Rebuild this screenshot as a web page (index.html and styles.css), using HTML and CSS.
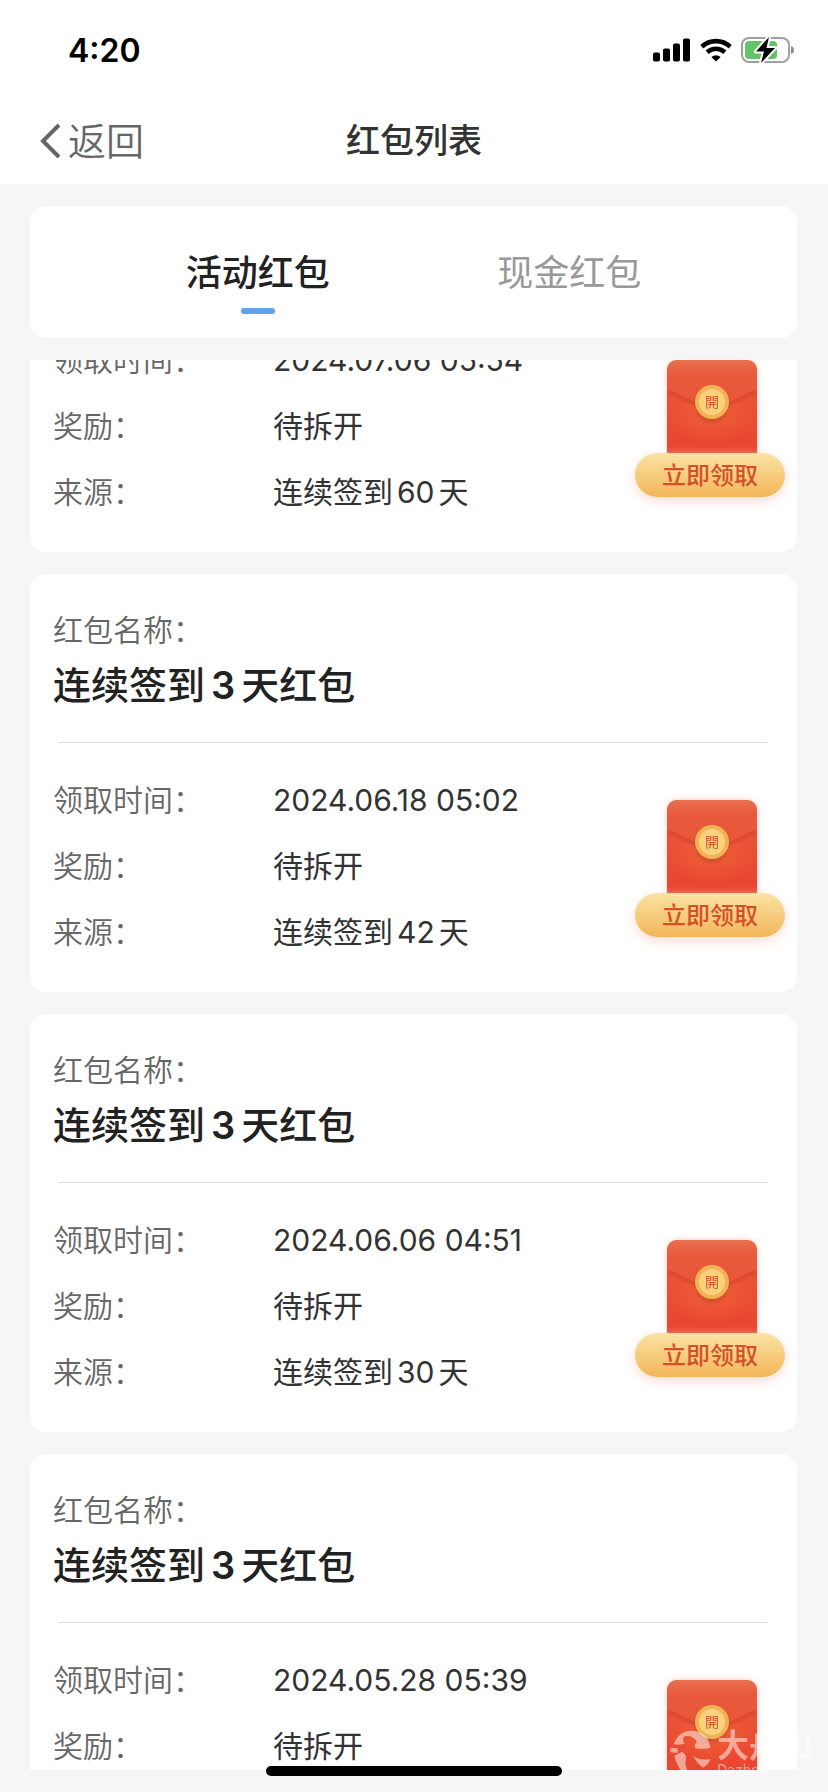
FILE: index.html
```html
<!DOCTYPE html>
<html lang="zh-CN">
<head>
<meta charset="utf-8">
<meta name="viewport" content="width=device-width, initial-scale=1">
<title>红包列表</title>
<link rel="stylesheet" href="styles.css">
</head>
<body>
<svg class="defs" width="0" height="0" aria-hidden="true">
  <defs>
    <linearGradient id="body-fill" x1="0" y1="0" x2="0" y2="1">
      <stop offset="0" stop-color="#e9593b"/>
      <stop offset="1" stop-color="#ea452e"/>
    </linearGradient>
    <radialGradient id="body-glow" cx="0.5" cy="0.4" r="0.5">
      <stop offset="0" stop-color="#ee6238" stop-opacity="0.9"/>
      <stop offset="1" stop-color="#ee6238" stop-opacity="0"/>
    </radialGradient>
    <linearGradient id="flap-fill" x1="0" y1="0" x2="0" y2="1">
      <stop offset="0" stop-color="#e8704f"/>
      <stop offset="0.3" stop-color="#e85a3c"/>
      <stop offset="1" stop-color="#e85738"/>
    </linearGradient>
    <filter id="soft" x="-20%" y="-20%" width="140%" height="150%"><feGaussianBlur stdDeviation="1.5"/></filter>
  </defs>
  <symbol id="envelope" viewBox="0 0 90 93">
    <path d="M0 93V12Q0 0 12 0H78Q90 0 90 12V93Z" fill="url(#body-fill)"/>
    <rect y="20" width="90" height="73" fill="url(#body-glow)"/>
    <path d="M1 30L36 46Q45 50 54 46L89 30V32L54 49Q45 53 36 49L1 32Z" fill="#b8321f" opacity="0.6" filter="url(#soft)"/>
    <path d="M0 29V12Q0 0 12 0H78Q90 0 90 12V29L54 45Q45 49 36 45Z" fill="url(#flap-fill)"/>
    <circle cx="45" cy="45" r="17" fill="#a93a1c" opacity="0.4" filter="url(#soft)"/>
    <circle cx="45" cy="42" r="17" fill="#f2b355"/>
    <circle cx="45" cy="42" r="13" fill="#fad27b"/>
    <text class="coin-text" x="45" y="47" text-anchor="middle">開</text>
  </symbol>
</svg>

<div class="app">
  <header class="header">
    <div class="status">
      <span class="time">4:20</span>
      <div class="status-icons">
        <svg width="38" height="24" viewBox="0 0 38 24" aria-hidden="true">
          <rect x="0" y="14.5" width="7" height="9" rx="1.8"/><rect x="10" y="10.5" width="7" height="13" rx="1.8"/>
          <rect x="20" y="5.5" width="7" height="18" rx="1.8"/><rect x="30" y="0.5" width="7" height="23" rx="1.8"/>
        </svg>
        <svg width="32" height="24" viewBox="0 0 32 24" aria-hidden="true">
          <g fill="none" stroke="#000" stroke-width="4.6">
            <path d="M1.8 8.7C9.8 1.2 22.2 1.2 30.2 8.7"/>
            <path d="M7.2 14.2C12.4 9.6 19.6 9.6 24.8 14.2"/>
          </g>
          <path d="M16 23.6L11.3 18.9Q16 15.5 20.7 18.9Z"/>
        </svg>
        <svg width="54" height="28" viewBox="0 0 54 28" aria-hidden="true">
          <rect x="1" y="2" width="47" height="24" rx="7" fill="#fff" stroke="#a0a0a0" stroke-width="2"/>
          <rect x="4" y="5" width="32" height="18" rx="4" fill="#62c466"/>
          <path d="M50 10Q53 11 53 14T50 18Z" fill="#8c8c8c"/>
          <path d="M28 1L15 15.5H23L20 27L34 12H25.5Z" stroke="#fff" stroke-width="4" stroke-linejoin="round" paint-order="stroke"/>
        </svg>
      </div>
    </div>
    <nav class="nav">
      <button class="back" type="button">
        <svg width="22" height="36" viewBox="0 0 22 36" aria-hidden="true"><path d="M19 2L3 18L19 34" fill="none" stroke="#666" stroke-width="4"/></svg>
        <span>返回</span>
      </button>
      <h1 class="page-title">红包列表</h1>
    </nav>
  </header>

  <div class="tabs" role="tablist">
    <button class="tab active" type="button" role="tab" aria-selected="true">活动红包</button>
    <button class="tab" type="button" role="tab" aria-selected="false">现金红包</button>
  </div>

  <main class="list">
    <div class="scroll">
      <article class="card">
        <p class="label name-label">红包名称：</p>
        <h2 class="name">连续签到<span class="num">3</span>天红包</h2>
        <hr class="rule">
        <div class="body">
          <dl class="facts">
            <dt class="label">领取时间：</dt><dd>2024.07.06 05:54</dd>
            <dt class="label">奖励：</dt><dd>待拆开</dd>
            <dt class="label">来源：</dt><dd>连续签到<span class="num">60</span>天</dd>
          </dl>
          <div class="claim"><svg class="envelope"><use href="#envelope"/></svg><button class="claim-btn" type="button">立即领取</button></div>
        </div>
      </article>
      <article class="card">
        <p class="label name-label">红包名称：</p>
        <h2 class="name">连续签到<span class="num">3</span>天红包</h2>
        <hr class="rule">
        <div class="body">
          <dl class="facts">
            <dt class="label">领取时间：</dt><dd>2024.06.18 05:02</dd>
            <dt class="label">奖励：</dt><dd>待拆开</dd>
            <dt class="label">来源：</dt><dd>连续签到<span class="num">42</span>天</dd>
          </dl>
          <div class="claim"><svg class="envelope"><use href="#envelope"/></svg><button class="claim-btn" type="button">立即领取</button></div>
        </div>
      </article>
      <article class="card">
        <p class="label name-label">红包名称：</p>
        <h2 class="name">连续签到<span class="num">3</span>天红包</h2>
        <hr class="rule">
        <div class="body">
          <dl class="facts">
            <dt class="label">领取时间：</dt><dd>2024.06.06 04:51</dd>
            <dt class="label">奖励：</dt><dd>待拆开</dd>
            <dt class="label">来源：</dt><dd>连续签到<span class="num">30</span>天</dd>
          </dl>
          <div class="claim"><svg class="envelope"><use href="#envelope"/></svg><button class="claim-btn" type="button">立即领取</button></div>
        </div>
      </article>
      <article class="card">
        <p class="label name-label">红包名称：</p>
        <h2 class="name">连续签到<span class="num">3</span>天红包</h2>
        <hr class="rule">
        <div class="body top">
          <dl class="facts">
            <dt class="label">领取时间：</dt><dd>2024.05.28 05:39</dd>
            <dt class="label">奖励：</dt><dd>待拆开</dd>
          </dl>
          <div class="claim"><svg class="envelope"><use href="#envelope"/></svg></div>
        </div>
      </article>
    </div>
  </main>
  <div class="home-bar"></div>
  <div class="watermark">
    <svg width="42" height="42" viewBox="19 25 126 126" aria-hidden="true">
      <g fill="#fff">
        <path d="M30 68Q45 25 90 27Q135 35 140 78Q120 85 95 80Q90 70 100 60Q85 38 60 45Q55 60 65 65Q50 72 30 68Z"/>
        <path d="M20 78L42 80V94L20 92Z"/>
        <path d="M32 102L55 90Q72 100 66 118Q62 135 75 150H55Q38 130 32 102Z"/>
        <path d="M88 103Q110 118 140 112Q135 128 118 138Q100 125 88 103Z"/>
      </g>
    </svg>
    <div class="mark-text"><span class="mark-cn">大舟山</span><span class="mark-en">Dazhou</span></div>
  </div>
</div>
</body>
</html>
```
FILE: styles.css
```css
* { box-sizing: border-box; margin: 0; padding: 0; }
body { background: #f6f6f6; color: #333; font-family: Inter, "Noto Sans CJK SC", sans-serif; }
button { border: 0; background: none; font: inherit; color: inherit; cursor: pointer; }
.defs { position: absolute; }

.app { position: relative; height: 100vh; display: flex; flex-direction: column; padding-bottom: 22px; overflow: hidden; }

.header { background: #fff; }
.status { height: 96px; display: flex; align-items: center; justify-content: space-between; padding: 4px 33px 0 68px; }
.time { font-size: 32px; font-weight: 600; color: #000; }
.status-icons { display: flex; align-items: center; gap: 9px; }
.nav { height: 88px; display: grid; grid-template-columns: 1fr auto 1fr; align-items: center; padding: 2px 40px 0; }
.back { display: flex; align-items: center; gap: 6px; justify-self: start; font-size: 38px; line-height: 48px; font-weight: 350; color: #666; }
.page-title { font-size: 34px; line-height: 48px; font-weight: 500; }

.tabs { display: flex; margin: 22px 31px 22px 30px; padding: 36px 72px 24px; background: #fff; border-radius: 16px; }
.tab { flex: 1; display: flex; flex-direction: column; align-items: center; gap: 4px; font-size: 36px; line-height: 62px; color: #999; }
.tab::after { content: ""; width: 34px; height: 6px; border-radius: 3px; }
.tab.active { color: #222; font-weight: 500; }
.tab.active::after { background: #60a1f0; }

.list { flex: 1; min-height: 0; overflow: hidden; padding: 0 31px 0 30px; }
/* scroll position within the list */
.scroll { display: flex; flex-direction: column; gap: 22px; margin-top: -226px; }

.card { background: #fff; border-radius: 16px; padding-top: 34px; }
.label { color: #666; font-weight: 350; }
.name-label { padding: 0 23px; font-size: 30px; line-height: 44px; }
.name { padding: 0 23px; font-size: 38px; line-height: 66px; font-weight: 500; color: #222; }
.name .num { margin: 0 6px; font-weight: 600; }
.num { margin: 0 4px; }
.rule { border: 0; height: 1px; margin: 24px 30px 0 28px; background: #e0e0e0; }
.body { display: flex; align-items: center; justify-content: space-between; padding: 25px 12px 28px 23px; }
.body.top { align-items: flex-start; }
.facts { display: grid; grid-template-columns: 220px auto; font-size: 30px; line-height: 64px; row-gap: 2px; }
.claim { display: flex; flex-direction: column; align-items: center; width: 150px; padding-top: 4px; }
.body.top .claim { padding-top: 32px; }
.envelope { width: 90px; height: 93px; margin-left: 4px; display: block; filter: drop-shadow(0 0 3px #f9c9bd); }
.coin-text { font-family: "Noto Sans CJK TC", sans-serif; font-size: 14px; fill: #d8512e; }
.claim-btn { position: relative; width: 100%; height: 44px; padding-top: 2px; border-radius: 22px; background: linear-gradient(#fae3a4, #f3b659); box-shadow: 0 4px 12px #fbdcd4; font-size: 24px; line-height: 42px; font-weight: 500; color: #d2502a; }

.home-bar { position: absolute; left: 50%; bottom: 16px; width: 296px; height: 10px; margin-left: -148px; border-radius: 5px; background: #000; }

.watermark { position: absolute; right: 15px; bottom: 14px; display: flex; align-items: flex-start; gap: 5px; opacity: 0.5; color: #fff; pointer-events: none; }
.mark-text { display: flex; flex-direction: column; }
.mark-cn { font-size: 32px; line-height: 32px; font-weight: 700; }
.mark-en { font-size: 14px; line-height: 16px; }
```
